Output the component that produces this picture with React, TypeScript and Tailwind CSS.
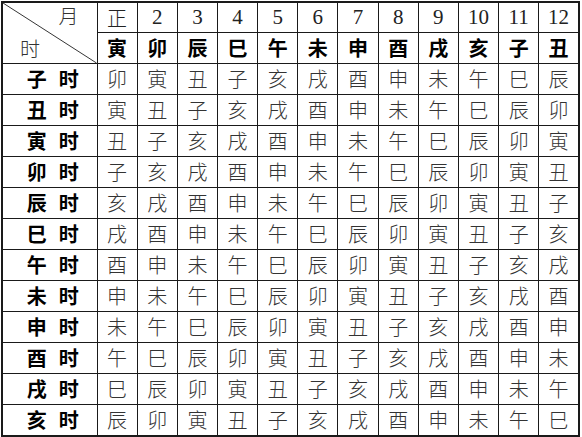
import React from "react";

const BRANCHES = ["子", "丑", "寅", "卯", "辰", "巳", "午", "未", "申", "酉", "戌", "亥"];
const MONTHS = ["正", "2", "3", "4", "5", "6", "7", "8", "9", "10", "11", "12"];
// month branches start at 寅
const MONTH_BRANCHES = Array.from({ length: 12 }, (_, j) => BRANCHES[(j + 2) % 12]);

const serif = { fontFamily: '"Liberation Serif", serif' };
const cjk = { fontFamily: '"Noto Sans CJK SC", "Liberation Sans", sans-serif' };

export default function App() {
  return (
    <div className="bg-white w-[582px] h-[437px] pt-[1px] pl-[1px]">
      <table className="table-fixed border-collapse w-[579px] border-2 border-[#1a1a1a] text-center">
        <colgroup>
          <col className="w-[95px]" />
          {MONTHS.map((m) => (
            <col key={m} />
          ))}
        </colgroup>
        <tbody>
          <tr className="h-[30px]">
            <td rowSpan={2} className="relative border border-[#1a1a1a] p-0">
              <svg className="absolute inset-0 w-full h-full" viewBox="0 0 95 60" preserveAspectRatio="none">
                <line x1="0" y1="0" x2="95" y2="60" stroke="#333" strokeWidth="1" />
              </svg>
              <div className="flex flex-col justify-between h-[60px] px-[16px] pt-[3px] pb-[4px] text-[20px] leading-none font-light text-[#333]" style={cjk}>
                <span className="self-end pr-[2px]">月</span>
                <span className="self-start pl-[1px]">时</span>
              </div>
            </td>
            {MONTHS.map((m, j) =>
              j === 0 ? (
                <td key={m} className="border border-[#1a1a1a] p-0 text-[20px] leading-none font-light text-[#222]" style={cjk}>
                  {m}
                </td>
              ) : (
                <td key={m} className="border border-[#1a1a1a] p-0 text-[21px] leading-none text-[#222]" style={serif}>
                  {m}
                </td>
              )
            )}
          </tr>
          <tr className="h-[30px]">
            {MONTH_BRANCHES.map((b) => (
              <td key={b} className="border border-[#1a1a1a] p-0 text-[20px] leading-none font-bold text-black" style={cjk}>
                {b}
              </td>
            ))}
          </tr>
          {BRANCHES.map((hour, i) => (
            <tr key={hour} className="h-[31px]">
              <td className="border border-[#1a1a1a] p-0 pl-[6px] text-[20px] leading-none font-bold text-black" style={cjk}>
                {hour}
                <span className="inline-block w-[12px]" />
                时
              </td>
              {MONTHS.map((m, j) => (
                <td
                  key={m}
                  className="border border-[#1a1a1a] p-0 text-[20px] leading-none font-light text-[#333]"
                  style={cjk}
                >
                  {BRANCHES[(((3 - i - j) % 12) + 12) % 12]}
                </td>
              ))}
            </tr>
          ))}
        </tbody>
      </table>
    </div>
  );
}
